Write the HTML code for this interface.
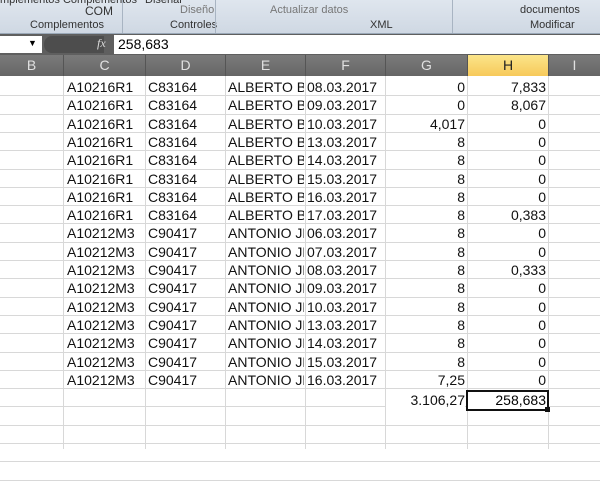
<!DOCTYPE html><html><head><style>
body{margin:0;width:600px;height:449px;overflow:hidden;background:#fff;font-family:"Liberation Sans",sans-serif;position:relative}
.rib{position:absolute;left:0;top:0;width:600px;height:33px;background:linear-gradient(#dfe6ee,#cfd8e3);border-bottom:1px solid #9aa8b8;overflow:hidden}
.rib div{position:absolute;font-size:11px;color:#333;white-space:nowrap}
.sep{position:absolute;top:0;height:33px;width:1px;background:#a8b4c2}
.fb{position:absolute;top:34px;left:0;width:600px;height:21px;background:#5f5f5f}
.hdr{position:absolute;top:55px;left:0;width:600px;height:21px;background:linear-gradient(#7a7a7a,#666)}
.hdr div{position:absolute;top:0;height:21px;line-height:21px;text-align:center;color:#e0e0e0;font-size:14px;border-right:1px solid #555}
.v{position:absolute;top:76px;width:1px;height:373px;background:#d8d8d8}
.h{position:absolute;left:0;width:600px;height:1px;background:#d8d8d8}
.c{position:absolute;font-size:14px;color:#111;white-space:nowrap;overflow:hidden;height:18px;line-height:18px}
</style></head><body>
<div class="rib">
<div style="left:0;top:-6px">mplementos Complementos</div>
<div style="left:85px;top:4px;font-size:12px">COM</div>
<div style="left:30px;top:19px">Complementos</div>
<div class="sep" style="left:122px"></div>
<div style="left:145px;top:-6px">Diseñar</div>
<div style="left:180px;top:4px;color:#777">Diseño</div>
<div style="left:170px;top:19px">Controles</div>
<div class="sep" style="left:215px"></div>
<div style="left:270px;top:4px;color:#777">Actualizar datos</div>
<div style="left:370px;top:19px">XML</div>
<div class="sep" style="left:452px"></div>
<div style="left:520px;top:4px">documentos</div>
<div style="left:530px;top:19px">Modificar</div>
</div>
<div class="fb">
<div style="position:absolute;left:0;top:2px;width:42px;height:17px;background:#fff"></div>
<div style="position:absolute;left:28px;top:4px;font-size:9px">▼</div>
<div style="position:absolute;left:44px;top:2px;width:60px;height:17px;background:#4d4d4d;border-radius:8px 0 0 8px"></div>
<div style="position:absolute;left:97px;top:2px;font-size:12px;color:#ddd;font-style:italic;font-family:'Liberation Serif',serif">fx</div>
<div style="position:absolute;left:114px;top:1px;width:486px;height:19px;background:#fff;font-size:14px;line-height:19px;padding-left:4px">258,683</div>
</div>
<div class="hdr">
<div style="left:0;width:63px">B</div>
<div style="left:64px;width:81px">C</div>
<div style="left:146px;width:79px">D</div>
<div style="left:226px;width:79px">E</div>
<div style="left:306px;width:79px">F</div>
<div style="left:386px;width:81px">G</div>
<div style="left:468px;width:80px;background:linear-gradient(#fbe58a,#f7c95a);color:#222">H</div>
<div style="left:549px;width:51px;border:0">I</div>
</div>
<div class="v" style="left:63px"></div><div class="v" style="left:145px"></div><div class="v" style="left:225px"></div><div class="v" style="left:305px"></div><div class="v" style="left:385px"></div><div class="v" style="left:467px"></div><div class="v" style="left:548px"></div>
<div id="g"></div>
<script>
var d=[["A10216R1","C83164","ALBERTO B","08.03.2017","0","7,833"],["A10216R1","C83164","ALBERTO B","09.03.2017","0","8,067"],["A10216R1","C83164","ALBERTO B","10.03.2017","4,017","0"],["A10216R1","C83164","ALBERTO B","13.03.2017","8","0"],["A10216R1","C83164","ALBERTO B","14.03.2017","8","0"],["A10216R1","C83164","ALBERTO B","15.03.2017","8","0"],["A10216R1","C83164","ALBERTO B","16.03.2017","8","0"],["A10216R1","C83164","ALBERTO B","17.03.2017","8","0,383"],["A10212M3","C90417","ANTONIO JE","06.03.2017","8","0"],["A10212M3","C90417","ANTONIO JE","07.03.2017","8","0"],["A10212M3","C90417","ANTONIO JE","08.03.2017","8","0,333"],["A10212M3","C90417","ANTONIO JE","09.03.2017","8","0"],["A10212M3","C90417","ANTONIO JE","10.03.2017","8","0"],["A10212M3","C90417","ANTONIO JE","13.03.2017","8","0"],["A10212M3","C90417","ANTONIO JE","14.03.2017","8","0"],["A10212M3","C90417","ANTONIO JE","15.03.2017","8","0"],["A10212M3","C90417","ANTONIO JE","16.03.2017","7,25","0"]];
var h="",t0=78,rh=18.3;
for(var i=0;i<22;i++){h+='<div class="h" style="top:'+Math.round(t0+rh*(i+1)-1)+'px"></div>';}
d.forEach(function(r,i){var t=Math.round(t0+rh*i);
h+='<div class="c" style="top:'+t+'px;left:67px;width:78px">'+r[0]+'</div>';
h+='<div class="c" style="top:'+t+'px;left:148px;width:76px">'+r[1]+'</div>';
h+='<div class="c" style="top:'+t+'px;left:228px;width:76px">'+r[2]+'</div>';
h+='<div class="c" style="top:'+t+'px;left:307px;width:78px">'+r[3]+'</div>';
h+='<div class="c" style="top:'+t+'px;left:386px;width:79px;text-align:right">'+r[4]+'</div>';
h+='<div class="c" style="top:'+t+'px;left:468px;width:78px;text-align:right">'+r[5]+'</div>';});
var t=Math.round(t0+rh*17)+2;
h+='<div class="c" style="top:'+t+'px;left:386px;width:79px;text-align:right;background:#fff">3.106,27</div>';
h+='<div style="position:absolute;top:'+(t-1)+'px;left:466px;width:78px;height:17px;border:2px solid #111;background:#fff;font-size:14px;line-height:17px;text-align:right;padding-right:1px">258,683</div>';
h+='<div style="position:absolute;top:'+(t+16)+'px;left:545px;width:5px;height:5px;background:#111"></div>';
document.getElementById("g").innerHTML=h;
</script>
</body></html>
